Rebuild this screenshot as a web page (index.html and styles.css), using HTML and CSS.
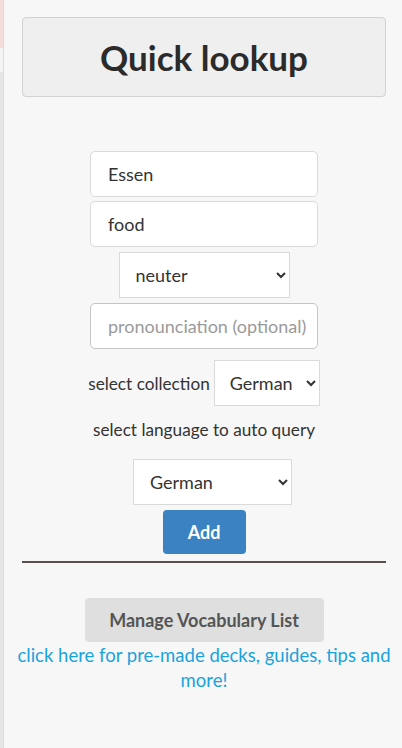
FILE: index.html
```html
<!DOCTYPE html>
<html lang="en">
<head>
<meta charset="utf-8">
<title>Quick lookup</title>
<link rel="stylesheet" href="styles.css">
</head>
<body>
<div class="backdrop">
  <div class="bd-top"></div>
  <div class="bd-mid"></div>
</div>
<main class="panel">
  <div class="header"><h1>Quick lookup</h1></div>
  <form class="form">
    <input class="field" type="text" value="Essen">
    <input class="field f2" type="text" value="food">
    <select class="sel sel-gender">
      <option>neuter</option>
      <option>masculine</option>
      <option>feminine</option>
    </select>
    <input class="field f2 pron" type="text" placeholder="pronounciation (optional)">
    <div class="row">
      <span class="label">select collection</span>
      <select class="sel sel-coll"><option>German</option></select>
    </div>
    <p class="label query">select language to auto query</p>
    <select class="sel sel-lang"><option>German</option></select>
    <button type="button" class="add">Add</button>
  </form>
  <hr class="rule">
  <div class="bottom">
    <button type="button" class="manage">Manage Vocabulary List</button>
    <a class="link" href="#">click here for pre-made decks, guides, tips and more!</a>
  </div>
</main>
</body>
</html>
```
FILE: styles.css
```css
* { box-sizing: border-box; }
html, body { margin: 0; height: 100%; }
body {
  display: flex;
  font-family: Lato, "Noto Sans", sans-serif;
  background: #f7f7f7;
  color: #333;
  overflow: hidden;
}
.backdrop {
  width: 3px;
  flex-shrink: 0;
  display: flex;
  flex-direction: column;
  background: #e6e6e6;
}
.bd-top { height: 48px; background: #f3dcd9; }
.bd-mid { height: 24px; background: #f4f4f4; }
.panel {
  flex: 1;
  min-width: 0;
  border-left: 1px solid #dcdcdc;
  background: #f7f7f7;
  padding: 17px 16px 0 18px;
}
.header {
  height: 80px;
  background: #efefef;
  border: 1px solid #d2d2d2;
  border-radius: 4px;
  display: flex;
  align-items: center;
  justify-content: center;
}
.header h1 {
  margin: 0;
  font-size: 35px;
  font-weight: 700;
  color: #2b2b2b;
}
.form {
  display: flex;
  flex-direction: column;
  align-items: center;
  margin-top: 54px;
}
.field {
  width: 228px;
  height: 46px;
  border: 1px solid #dadada;
  border-radius: 5px;
  background: #fff;
  padding: 0 6px 0 17px;
  font-family: Lato, sans-serif;
  font-size: 18px;
  color: #333;
}
.f2 { margin-top: 4px; }
.pron { margin-top: 5px; border-color: #c4c4c4; }
.pron::placeholder { color: #9a9a9a; }
.sel {
  height: 46px;
  border: 1px solid #dadada;
  border-radius: 0;
  background: #fff;
  font-family: Lato, sans-serif;
  font-size: 18px;
  color: #333;
  padding: 0 8px 0 11px;
}
.sel-gender { width: 171px; margin-top: 5px; padding-left: 12px; }
.row {
  display: flex;
  align-items: center;
  gap: 4px;
  margin-top: 11px;
}
.label { font-size: 17.2px; color: #333; }
.sel-coll { width: 106px; }
.query { margin: 14px 0 0; line-height: 20px; }
.sel-lang { width: 159px; margin: 19px 0 0 17px; padding-left: 12px; }
.add {
  margin-top: 5px;
  width: 83px;
  height: 44px;
  border: 0;
  border-radius: 4px;
  background: #3a82c1;
  color: #fff;
  font-family: Lato, sans-serif;
  font-size: 18px;
  font-weight: 700;
}
.rule {
  margin: 7px 0 0;
  border: 0;
  height: 2px;
  background: #5a504d;
}
.bottom {
  display: flex;
  flex-direction: column;
  align-items: center;
  margin-top: 35px;
}
.manage {
  width: 239px;
  height: 44px;
  border: 0;
  border-radius: 4px;
  background: #dfdfdf;
  color: #555;
  font-family: Lato, sans-serif;
  font-size: 18px;
  font-weight: 700;
}
.link {
  margin: 1px -8px 0;
  color: #19a3dc;
  text-decoration: none;
  font-size: 18.5px;
  line-height: 25px;
  text-align: center;
}
```
